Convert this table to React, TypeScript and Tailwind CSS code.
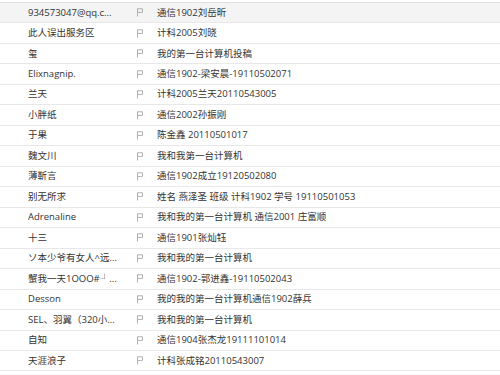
import React from "react"

const rows: [string, string][] = [
  ["934573047@qq.c...", "通信1902刘岳昕"],
  ["此人误出服务区", "计科2005刘晓"],
  ["玺", "我的第一台计算机投稿"],
  ["Elixnagnip.", "通信1902-梁安晨-19110502071"],
  ["兰天", "计科2005兰天20110543005"],
  ["小胖纸", "通信2002孙振刚"],
  ["于果", "陈金鑫 20110501017"],
  ["魏文川", "我和我第一台计算机"],
  ["薄靳言", "通信1902成立19120502080"],
  ["别无所求", "姓名 燕泽圣 班级 计科1902 学号 19110501053"],
  ["Adrenaline", "我和我的第一台计算机 通信2001 庄富顺"],
  ["十三", "通信1901张灿钰"],
  ["ソ本少爷有女人^远...", "我和我的第一台计算机"],
  ["蟹我一天1OOO#┘...", "通信1902-郭进鑫-19110502043"],
  ["Desson", "我的我的第一台计算机通信1902薛兵"],
  ["SEL、羽翼（320小...", "我和我的第一台计算机"],
  ["自知", "通信1904张杰龙19111101014"],
  ["天涯浪子", "计科张成铭20110543007"],
]

function Flag() {
  return (
    <svg width="7" height="9" viewBox="0 0 7 9" className="shrink-0">
      <path d="M0.5 0.5V8.5M0.5 0.8H5.5V4.4H0.5" fill="none" stroke="#b0b0b0" strokeWidth="1" />
    </svg>
  )
}

export default function App() {
  return (
    <div
      className="w-[500px] h-[375px] overflow-hidden bg-white pt-[2px] text-[9.5px] text-[#333]"
      style={{ fontFamily: '"Open Sans", "Noto Sans CJK SC", sans-serif' }}
    >
      <div className="border-t border-[#dde1e6]">
        {rows.map(([name, text], i) => (
          <div
            key={i}
            className={`flex items-center h-[20.47px] border-b border-[#e8e8e8] ${i === 0 ? "bg-[#f4f4f4]" : "bg-white"}`}
          >
            <div className="w-[109px] ml-[28px] whitespace-nowrap overflow-hidden">{name}</div>
            <Flag />
            <div className="ml-[13px] whitespace-nowrap">{text}</div>
          </div>
        ))}
      </div>
    </div>
  )
}
